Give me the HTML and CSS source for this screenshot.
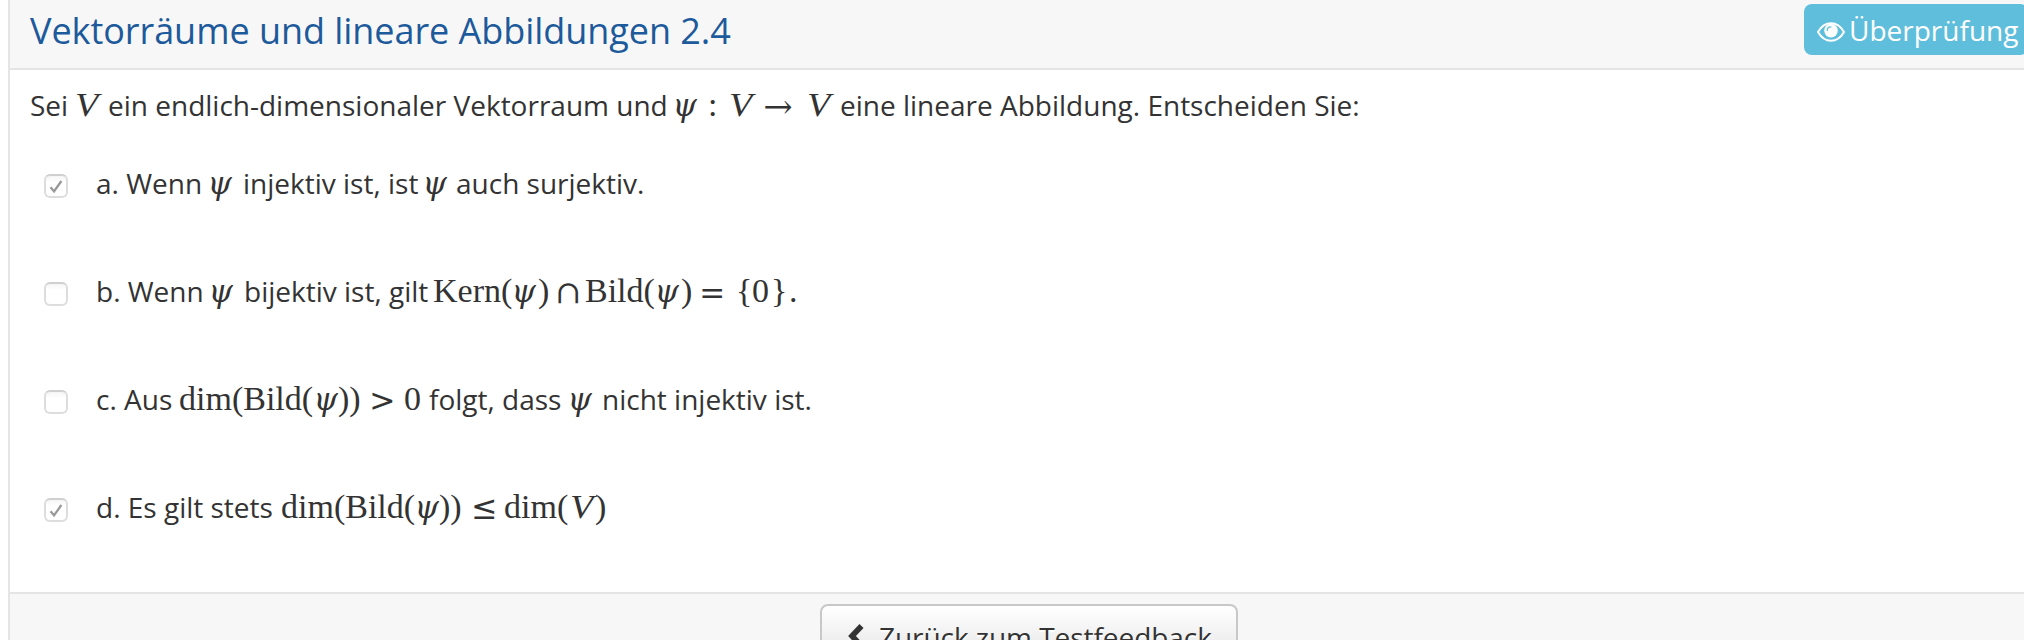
FILE: index.html
```html
<!DOCTYPE html>
<html lang="de">
<head>
<meta charset="utf-8">
<title>Vektorräume und lineare Abbildungen 2.4</title>
<link rel="stylesheet" href="styles.css">
</head>
<body>
<main class="panel">
  <header class="panel-head">
    <h1>Vektorräume und lineare Abbildungen 2.4</h1>
    <span class="badge">
      <svg class="eye" viewBox="0 0 28 20"><path d="M1 10Q6 1.3 14 1.3T27 10Q22 18.7 14 18.7T1 10Z" fill="none" stroke="#fff" stroke-width="2"/><circle cx="14" cy="8.6" r="6.8" fill="#fff"/><path d="M10.2 8.6Q10.2 4.8 14 4.8" fill="none" stroke="#5fbedc" stroke-width="1.3" stroke-linecap="round"/></svg>
      <span>Überprüfung</span>
    </span>
  </header>
  <section class="question">
    <p class="line intro"><span>Sei</span><i class="v">V</i><span>ein endlich-dimensionaler Vektorraum und</span><span class="sym">𝜓</span><span class="m">:</span><i class="v">V</i><span class="sym">→</span><i class="v">V</i><span>eine lineare Abbildung. Entscheiden Sie:</span></p>
    <div class="option">
      <span class="check"><svg viewBox="0 0 20 20"><path d="M4 11.5L7.8 16L16 4.5" fill="none" stroke="#999" stroke-width="2.6"/></svg></span>
      <p class="line a"><span>a. Wenn</span><span class="sym">𝜓</span><span>injektiv ist, ist</span><span class="sym">𝜓</span><span>auch surjektiv.</span></p>
    </div>
    <div class="option">
      <span class="check"></span>
      <p class="line b"><span>b. Wenn</span><span class="sym">𝜓</span><span>bijektiv ist, gilt</span><span class="m">Kern(</span><span class="sym">𝜓</span><span class="m">)</span><span class="sym">∩</span><span class="m">Bild(</span><span class="sym">𝜓</span><span class="m">)</span><span class="sym">=</span><span class="m">{</span><span class="m">0</span><span class="m">}</span><span class="m">.</span></p>
    </div>
    <div class="option">
      <span class="check"></span>
      <p class="line c"><span>c. Aus</span><span class="m">dim(Bild(</span><span class="sym">𝜓</span><span class="m">))</span><span class="sym">&gt;</span><span class="m">0</span><span>folgt, dass</span><span class="sym">𝜓</span><span>nicht injektiv ist.</span></p>
    </div>
    <div class="option">
      <span class="check"><svg viewBox="0 0 20 20"><path d="M4 11.5L7.8 16L16 4.5" fill="none" stroke="#999" stroke-width="2.6"/></svg></span>
      <p class="line d"><span>d. Es gilt stets</span><span class="m">dim(Bild(</span><span class="sym">𝜓</span><span class="m">))</span><span class="sym">≤</span><span class="m">dim(</span><i class="v">V</i><span class="m">)</span></p>
    </div>
  </section>
  <footer class="panel-foot">
    <button class="back" type="button"><svg viewBox="0 0 18 26"><path d="M14.5 3L5 13L14.5 23" fill="none" stroke="#333" stroke-width="5.6"/></svg><span>Zurück zum Testfeedback</span></button>
  </footer>
</main>
</body>
</html>
```
FILE: styles.css
```css
* { box-sizing: border-box; }
body {
  margin: 0;
  height: 640px;
  overflow: hidden;
  background: #fff;
  color: #333;
  font: 28px/40px "Open Sans", sans-serif;
}
.panel {
  margin-left: 8px;
  width: 2040px;
  height: 640px;
  overflow: hidden;
  border-left: 2px solid #e5e5e5;
}
.panel-head {
  display: flex;
  justify-content: space-between;
  align-items: flex-start;
  height: 70px;
  padding: 4px 20px 0;
  background: #f7f7f7;
  border-bottom: 2px solid #e5e5e5;
}
h1 {
  margin: 7px 0 0;
  color: #1d5a9b;
  font-size: 36px;
  font-weight: 400;
  line-height: 40px;
  letter-spacing: -.05px;
}
.badge {
  display: flex;
  gap: 4px;
  width: 224px;
  height: 51px;
  padding: 6px 0 0 13px;
  border-radius: 8px;
  background: #5fbedc;
  color: #fff;
  white-space: nowrap;
}
.eye { width: 28px; height: 20px; margin-top: 12px; flex: none; }
.question { height: 522px; padding: 15px 20px 0; }
.line {
  display: grid;
  align-items: baseline;
  justify-content: start;
  margin: 0;
  height: 40px;
  white-space: nowrap;
}
.m, .v, .sym { font-size: 34px; line-height: 28px; }
.m, .v { font-family: "Liberation Serif", serif; }
.v { transform: scaleX(1.12); transform-origin: left; }
.sym { font-family: "DejaVu Math TeX Gyre", "DejaVu Serif", serif; font-size: 31px; }
.intro { grid-template-columns: 45px 33px 566px 34px 21px 34px 44px 33px auto; margin-bottom: 38px; }
.a { grid-template-columns: 113px 34px 181px 32px auto; }
.b { grid-template-columns: 114px 34px 189px 80px 25px 18px 29px 71px 25px 19px 36px 16px 19px 18px auto; }
.c { grid-template-columns: 83px 136px 23px 32px 34px 25px 140px 33px auto; }
.d { grid-template-columns: 185px 135px 23px 33px 32px 66px 25px auto; }
.option { display: flex; height: 108px; padding-left: 14px; }
.check {
  flex: none;
  width: 24px;
  height: 24px;
  margin: 11px 28px 0 0;
  padding: 1px;
  border: 2px solid #ddd;
  border-top-color: #d0d0d0;
  border-radius: 6px;
  background: linear-gradient(#f5f5f5, #fff 30%);
}
.check svg { display: block; width: 18px; height: 18px; }
.panel-foot {
  display: flex;
  align-items: flex-start;
  height: 60px;
  padding: 10px 0 0 810px;
  background: #f7f7f7;
  border-top: 2px solid #e5e5e5;
}
.back {
  display: flex;
  gap: 14px;
  flex: none;
  width: 418px;
  height: 66px;
  padding: 11px 0 0 25px;
  border: 2px solid #c8c8c8;
  border-radius: 8px;
  background: linear-gradient(#fff, #e2e2e2);
  color: #333;
  font: 28px/40px "Open Sans", sans-serif;
  letter-spacing: -.05px;
  text-shadow: 0 2px 1px #fff;
  white-space: nowrap;
}
.back svg { width: 18px; height: 26px; margin-top: 6px; flex: none; }
```
